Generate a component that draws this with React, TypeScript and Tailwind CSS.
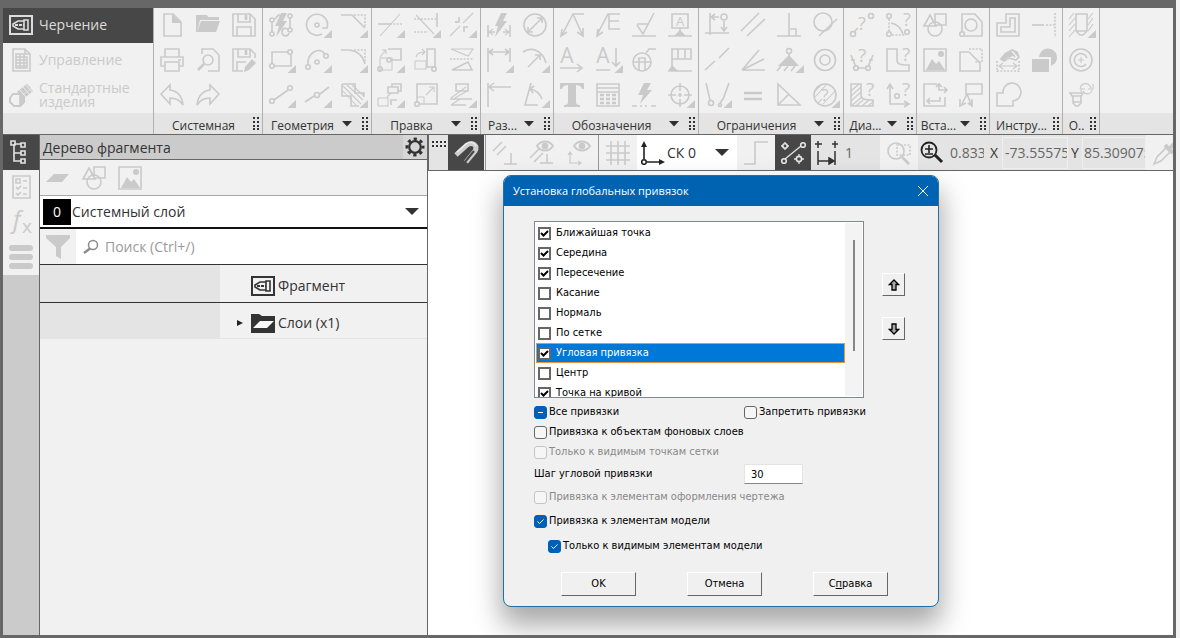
import React, { useState } from "react";
import type { ReactNode } from "react";

type Circle = [number, number, number];
type Letter = [string, number, number, number];

interface Glyph {
  s?: string; // medium strokes
  n?: string; // thin strokes
  d?: string; // dotted strokes
  b?: string; // heavy strokes
  f?: string; // filled shapes
  c?: Circle[];
  x?: Letter[];
  t?: boolean; // corner mark of a button with a drop-down list
}

const BOLT = "M12 0h6l-4 8h4L7 24l3-11H6z";
const Q = (x: number, y: number, size = 15): Letter => ["?", x, y, size];

const glyphs: Record<string, Glyph> = {
  newDoc: { s: "M4 1h9l8 8v14H4z", f: "M12 1l9 9h-9z" },
  open: { f: "M0 2h11l1 2h11v3H4L1 19H0z M5 8h19l-4 11H1z" },
  save: { s: "M1 1h17l5 5v17H1z M6 1v8h12V1 M5 23V14h14v9", b: "M14 2v5" },
  print: { s: "M5 9V1h14v8 M5 18H1V9h22v9h-4 M5 14h14v9H5z M18 12h3" },
  preview: { s: "M6 6V1h11l6 6v16H12", b: "M8 16l-6 6", c: [[12, 12, 5]] },
  saveEdit: { s: "M23 10V6l-5-5H1v22h10 M6 1v8h12V1 M5 23V14h9", b: "M14 2v5", f: "M13 19l7-8 4 4-7 7-5 2z" },
  undo: { s: "M1 11L10 2v5c8 1 12 6 13 15c-3-5-7-7-13-7v6z" },
  redo: { s: "M23 11L14 2v5C6 8 2 13 1 22c3-5 7-7 13-7v6z" },

  autoLine: { s: "M3 9v10 M5 6c3 0 3-5 6-4 M21 5v10 M19 17c-2-3-6-2-6 2c0 5 6 5 7 1", f: BOLT, c: [[3, 7, 2], [3, 21, 2], [21, 3, 2], [21, 17, 2]] },
  circle: { s: "M17 21A10.500 10.500 0 1 1 22 15h-5", c: [[12, 12, 2]], t: true },
  chamfer: { s: "M0 2h11l13 13", d: "M13 2h11v12", t: true },
  rect: { s: "M5 18h17V7 M19 4H3v12", c: [[3, 18, 2.2], [21, 4, 2.2]], t: true },
  arc: { s: "M3 17C2 5 14-2 20 6", c: [[3, 19, 2.2], [21, 8, 2.2], [12, 14, 2]], t: true },
  fillet: { s: "M0 2h8c9 1 14 6 16 14", d: "M13 2h11v12", t: true },
  segment: { s: "M5 17L19 7", c: [[3, 18, 2.300], [21, 5, 2.300]], t: true },
  lineMid: { s: "M0 19l9-6 M15 11l9-7", c: [[12, 12, 2.500]], t: true },
  hatch: { s: "M1 1h13v9h9v4 M1 1v12h9v10h8", n: "M2 3l18 18 M2 8l13 14 M6 2l16 15 M11 2l12 11", t: true },

  trim: { n: "M2 23L22 1", s: "M0 11h12", d: "M12 11h12", t: true },
  extend: { n: "M2 2l18 19", d: "M0 6h22 M0 19h14", s: "M23 0v14", t: true },
  split: { s: "M6 10V8 M5 9h4V4 M18 14h-4v5", n: "M0 23L10 13 M13 10L23 0", t: true },
  moveCopy: { n: "M2 9L8 2 M4 2h4v4 M2 10h12v12H2z", s: "M10 1h13v11H12", c: [[11, 12, 2], [2, 21, 2.2]], t: true },
  rotate: { n: "M1 13h11v8H1z M2 9C3 5 6 4 11 4 M8 1l3 3-3 3", s: "M13 1h8v18H13z", c: [[20, 21, 2.200]] },
  mirror: { n: "M1 1h22l-5 7z", s: "M2 22l16-8 4 8z", d: "M0 11h24" },
  array: { n: "M0 15h10v8H0z M13 10l-4 4", s: "M10 4h10v6H10z M14 4V1h9v7h-3 M13 22v-5h6", t: true },
  scale: { s: "M3 20V1h20v20H5", n: "M3 14h7v7 M12 12l7-7 M15 4h5v5", c: [[3, 21, 2.300]] },
  deform: { s: "M6 1h12v7H6z M0 16h22 M1 22h15", n: "M1 15L16 4 M5 15L17 8 M1 22l9-6", t: true },

  autoDim: { s: "M1 12v12 M23 12v12 M2 19h6 M16 19h6", n: "M6 16l-4 3 4 3 M18 16l4 3-4 3", f: "M14 0h6l-4 8h4L8 24l3-11H8z" },
  diameter: { s: "M5 19L19 5 M14 5h5v5 M5 14v5h5", c: [[12, 12, 11]] },
  linDim: { s: "M1 0v24 M23 0v14 M2 4h20 M6 1L2 4l4 3 M18 1l4 3-4 3", t: true },
  radDim: { s: "M0 4c9-6 20-1 23 11 M5 19L17 7 M12 7h5v5", t: true },
  heightDim: { s: "M1 0v24 M2 4h22 M7 0L2 4l5 4" },
  angDim: { s: "M8 0L2 22h13 M7 6c7 1 10 5 12 10 M11 3L7 6l3 4", t: true },

  leader: { s: "M12 1h12 M13 1L2 22 M13 1l9 20 M2 16l-1 7 6-4 M17 19l6 4v-8" },
  leaderE: { s: "M24 1H12L1 22 M2 16l-1 7 6-4 M13 1v15h11 M13 8h10" },
  rough: { s: "M0 23h24 M5 11h11 M5 12l6 9L22 0" },
  datum: { s: "M4 1h16v14H4z M12 15v6 M0 23h24", f: "M12 17l6 6H6z", x: [["A", 12, 13, 13]] },
  textLine: { s: "M0 20h22 M17 16l5 4-5 4", x: [["A", 7, 15, 21]] },
  textDown: { s: "M0 22h14 M20 0v18 M16 14l4 4 4-4", x: [["A", 7, 15, 21]], t: true },
  weld: { s: "M14 5l3-4h7 M1 14h5 M14 14h5 M7 22V10h6v12 M7 14h6", c: [[10, 14, 9]] },
  tolerance: { s: "M4 1h19v10H4z M10 1v10 M17 1v10 M4 1v22 M0 23h24", f: "M4 17l6 6H0z" },
  text: { f: "M0 0h24v6h-2c-1-3-3-4-6-4v17c0 2 1 3 4 3v2H4v-2c3 0 4-1 4-3V2C5 2 3 3 2 6H0z" },
  table: { s: "M1 1h22v22H1z M1 5h22 M1 9h22", b: "M4 12h4 M10 12h4 M16 12h4 M4 16h4 M10 16h4 M16 16h4 M4 20h4 M10 20h4 M16 20h4" },
  flash: { s: "M0 23h5 M8 23h2 M13 23h2 M19 23h5", f: "M12 0h7l-4 7h5L8 21l3-9H6z" },
  center: { s: "M0 12h8 M10 12h4 M16 12h8 M12 0v8 M12 10v4 M12 16v8", c: [[12, 12, 9]], t: true },

  align: { s: "M5 0v22 M0 20h24 M6 4h8 M10 1L6 4l4 3 M19 8v10 M16 14l3 4 3-4", c: [[19, 4, 3]] },
  parallel: { s: "M0 18L18 0 M6 23L24 6" },
  perp: { s: "M0 23h24 M12 0v23 M13 16h6v7" },
  tangent: { s: "M6 23L24 6", c: [[10, 9, 9]] },
  collinear: { s: "M0 22l10-9 M14 10L24 0" },
  angleEq: { s: "M18 2L1 22 23 11 M1 22h23" },
  fix: { s: "M12 6v4 M4 18l-4 5 M11 18l-4 5 M18 18l-4 5", f: "M12 7L22 18H1z", c: [[12, 3, 2.500]], t: true },
  concentric: { c: [[12, 12, 10.500], [12, 12, 5]] },
  pointOn: { s: "M1 0l4 17 M24 0l-6 16-3 4", c: [[6, 20, 2.500], [15, 22, 1.500]], t: true },
  equal: { b: "M3 10h18 M3 16h18" },
  triangle: { s: "M1 1v21h22z M1 22l11-11" },
  showCons: { n: "M2 8l6-6 M2 14L14 1 M10 21L22 8 M5 20l4-4", x: [Q(12, 18, 17)], c: [[12, 12, 11]], t: true },

  measDist: { s: "M4 19l4-4", c: [[3, 21, 2.500], [21, 3, 2.500]], x: [Q(12, 17, 18)] },
  measAng: { s: "M5 10c6 1 10 5 12 11", d: "M3 6v14 M6 22h14", c: [[3, 3, 2.300], [3, 21, 2.300], [21, 19, 2.300]], x: [Q(21, 13, 18)] },
  measLen: { s: "M1 7l5 12 M23 7l-5 12 M7 20h10 M1 12h4 M19 12h4", c: [[6, 20, 2.300], [18, 20, 2.300]], x: [Q(12, 14, 19)] },
  area: { s: "M1 1h10v11c0 4 3 5 12 5v6H1z", x: [Q(20, 13, 19)] },
  massHatch: { s: "M1 1h10v11c0 4 3 5 12 5v6H1z", n: "M1 8l8-7 M1 13L11 4 M1 18l10-9 M1 23l11-9 M6 23l7-6 M12 23l7-6 M18 23l5-4", x: [Q(20, 13, 19)] },
  coord: { s: "M4 2v19h18 M1 6l3-5 3 5 M18 18l5 3-5 3", c: [[11, 13, 2.300]], x: [Q(20, 13, 19)] },

  shapes: { s: "M7 2L1 13h12z M12 1h11v11H12z", c: [[12, 16, 7]] },
  fragment: { s: "M3 19V1h13l7 8v14H5", c: [[12, 12, 6], [3, 21, 2.300]] },
  image: { s: "M1 1h22v22H1z", f: "M3 22L9 11l4 5 3-3 6 9z M18 3a3 3 0 1 1 0 6a3 3 0 1 1 0-6z" },
  view: { s: "M10 4H1v19h20v-8 M10 4l11 11", d: "M10 1h13v13h-8" },
  insert: { s: "M14 1H1v22h21v-9 M4 18h13v-4 M7 15l-3 3 3 3 M16 1v6h8 M21 4l3 3-3 3 M13 4l3-3 3 3" },
  viewArrow: { s: "M7 1h16v10H7z M8 11L3 21 M8 11l4 10 M1 16v7l6-3 M9 20l4 3v-7" },

  outline: { s: "M10 1h13v22H1V10h9z M14 5h5v14H5v-5h9z" },
  axis: { s: "M0 12h12", d: "M14 12h8 M23 0v24" },
  editDim: { s: "M5 11l4-5 7-4 5 2 2 5-3 3-7-2-5 3z M14 3l5 6 M17 2l5 6", f: "M4 11l5-6 6-3 2 6-6 2-4 3z", n: "M3 18h18 M7 15l-4 3 4 3 M17 15l4 3-4 3", d: "M1 13v11 M23 13v11 M1 23h22" },
  boolean: { f: "M0 11h17v13H0z M7 9a9 9 0 1 1 12 9V9z" },
  union: { s: "M1 10h6a9 9 0 1 1 10 8v5H1z" },

  hole: { s: "M7 1h11v17l-4 4h-3l-4-4z M7 18h11", n: "M0 6l5-6 M0 12l6-7 M0 18l6-7 M0 24l6-7 M19 6l5-6 M19 12l5-7 M19 18l5-7", t: true },
  thread: { n: "M12 9v6 M9 12h6", s: "M18 10a6.500 6.500 0 1 0-1 6", c: [[12, 12, 11]] },
  fastener: { s: "M1 10h13l-2 3H3z M4 13h8v7l-3 3h-2l-3-3z M4 19h8", n: "M11 6c1-7 9-7 11-1 M24 1v5h-5 M23 7c-1 5-7 5-9 1 M12 10V6h4" },
};

function Icon({ name }: { name: string }) {
  const g = glyphs[name];
  return (
    <svg viewBox="0 0 24 24" className="size-6 overflow-visible" fill="none" stroke="currentColor" strokeWidth="1.6" aria-hidden="true">
      {g.f && <path d={g.f} fill="currentColor" stroke="none" />}
      {g.s && <path d={g.s} />}
      {g.n && <path d={g.n} strokeWidth="1.1" />}
      {g.b && <path d={g.b} strokeWidth="2.6" />}
      {g.d && <path d={g.d} strokeDasharray="2 1.4" />}
      {g.c?.map(([cx, cy, r], i) => <circle key={i} cx={cx} cy={cy} r={r} />)}
      {g.x?.map(([ch, x, y, size], i) => (
        <text key={i} x={x} y={y} fontSize={size} textAnchor="middle" fill="currentColor" stroke="none">{ch}</text>
      ))}
      {g.t && <path d="M27 17v8h-8.500z" fill="currentColor" stroke="none" />}
    </svg>
  );
}

interface Group { label: string; cols: string; arrow: boolean; rows: string[] }

const groups: Group[] = [
  { label: "Системная", cols: "w-27 grid-cols-3", arrow: false, rows: ["newDoc", "open", "save", "print", "preview", "saveEdit", "undo", "redo"] },
  { label: "Геометрия", cols: "w-27 grid-cols-3", arrow: true, rows: ["autoLine", "circle", "chamfer", "rect", "arc", "fillet", "segment", "lineMid", "hatch"] },
  { label: "Правка", cols: "w-27 grid-cols-3", arrow: true, rows: ["trim", "extend", "split", "moveCopy", "rotate", "mirror", "array", "scale", "deform"] },
  { label: "Раз...", cols: "w-18 grid-cols-2", arrow: true, rows: ["autoDim", "diameter", "linDim", "radDim", "heightDim", "angDim"] },
  { label: "Обозначения", cols: "w-36 grid-cols-4", arrow: true, rows: ["leader", "leaderE", "rough", "datum", "textLine", "textDown", "weld", "tolerance", "text", "table", "flash", "center"] },
  { label: "Ограничения", cols: "w-36 grid-cols-4", arrow: true, rows: ["align", "parallel", "perp", "tangent", "collinear", "angleEq", "fix", "concentric", "pointOn", "equal", "triangle", "showCons"] },
  { label: "Диа...", cols: "w-18 grid-cols-2", arrow: true, rows: ["measDist", "measAng", "measLen", "area", "massHatch", "coord"] },
  { label: "Вста...", cols: "w-18 grid-cols-2", arrow: true, rows: ["shapes", "fragment", "image", "view", "insert", "viewArrow"] },
  { label: "Инстру...", cols: "w-18 grid-cols-2", arrow: false, rows: ["outline", "axis", "editDim", "boolean", "union"] },
  { label: "О..", cols: "w-9 grid-cols-1", arrow: false, rows: ["hole", "thread", "fastener"] },
];

function Grip() {
  return (
    <svg viewBox="0 0 6 13" className="mr-[3px] h-[13px] w-1.5 shrink-0" fill="#333" aria-hidden="true">
      {[0, 4, 8, 11].map((y) => (
        <path key={y} d={`M0 ${y}h2v2h-2z M4 ${y}h2v2h-2z`} />
      ))}
    </svg>
  );
}

function Caret() {
  return (
    <svg viewBox="0 0 10 6" className="h-1.5 w-2.5 shrink-0" fill="#2e2e2e" aria-hidden="true">
      <path d="M0 0h10L5 5.500z" />
    </svg>
  );
}

function RibbonGroup({ group }: { group: Group }) {
  return (
    <section className="flex shrink-0 flex-col border-r border-[#b0b0b0]" aria-label={group.label}>
      <div className={`grid h-[105px] grid-rows-3 text-[#cacaca] ${group.cols}`}>
        {group.rows.map((n) => (
          <button key={n} type="button" aria-label={n} className="flex items-center justify-center pb-px">
            <Icon name={n} />
          </button>
        ))}
      </div>
      <div className="flex h-[21px] items-center bg-[#e4e4e4]">
        <span className="flex-1 pt-1 text-center text-[12px] leading-4 whitespace-nowrap text-[#333]">{group.label}</span>
        {group.arrow && (
          <button type="button" aria-label="Список" className="mr-2.5"><Caret /></button>
        )}
        <Grip />
      </div>
    </section>
  );
}

function DraftIcon() {
  return (
    <svg viewBox="0 0 24 20" className="h-5 w-6 shrink-0" fill="none" stroke="currentColor" strokeWidth="2" aria-hidden="true">
      <path d="M1 1h22v18H1z" />
      <path d="M15 5h4v10h-4z M15 6H9L4 9v2l5 3h6" strokeWidth="1.600" />
      <path d="M6 10h9" strokeWidth="1.800" strokeDasharray="3 1" />
    </svg>
  );
}

function Ribbon() {
  return (
    <header className="flex h-[127px] overflow-hidden border-b border-[#666] bg-[#f1f1f1]">
      <nav className="flex w-[151px] shrink-0 flex-col border-r border-[#b0b0b0] text-[14px] leading-[14px] text-[#cacaca]">
        <button type="button" className="flex h-[35px] items-center gap-1.5 bg-[#474747] pb-px pl-1.5 text-left text-[#dcdcdc]">
          <DraftIcon />
          Черчение
        </button>
        <button type="button" className="flex h-[35px] items-center gap-1.5 pb-px pl-1.5 text-left">
          <svg viewBox="0 0 24 24" className="size-6 shrink-0" fill="none" stroke="currentColor" strokeWidth="1.6" aria-hidden="true">
            <path d="M4 1h12l5 5v17H4z M16 1v5h5" />
            <path d="M7 6h8v14H7z M15 9h3v11h-3 M7 9h8 M7 12h11 M7 15h11 M7 18h11 M11 6v14" />
          </svg>
          Управление
        </button>
        <button type="button" className="flex h-[35px] items-center gap-1.5 pb-px pl-1.5 text-left">
          <svg viewBox="0 0 24 24" className="size-6 shrink-0" fill="none" stroke="currentColor" strokeWidth="1.5" aria-hidden="true">
            <path d="M9 10l10-8 M11 12L21 4 M13 15L23 7" strokeWidth="3" />
            <path d="M11 7l6 7 M14 4l6 7 M17 2l6 7" stroke="#f1f1f1" strokeWidth="1" />
            <path d="M1 15l3-4h7l4 3v5l-4 4H5l-4-4z" fill="#f1f1f1" strokeWidth="2" />
            <path d="M11 11l4 3v5l-4 4z" fill="currentColor" />
          </svg>
          <span>Стандартные<br />изделия</span>
        </button>
        <div className="flex-1 bg-[#e4e4e4]" />
      </nav>
      {groups.map((g) => <RibbonGroup key={g.label} group={g} />)}
      <div className="flex flex-1 flex-col justify-end">
        <div className="h-[21px] bg-[#e4e4e4]" />
      </div>
    </header>
  );
}

function Rail() {
  return (
    <nav className="w-[37px] shrink-0 border-r border-[#666] bg-[#cbcbcb] text-[#cacaca]">
      <button type="button" aria-label="Дерево" className="flex h-[35px] w-full items-center justify-center bg-[#474747] pr-px pb-px">
        <svg viewBox="0 0 24 24" className="size-6" fill="none" stroke="#e4e4e4" strokeWidth="1.6" aria-hidden="true">
          <path d="M5 4v17h7 M5 4h7 M5 13h7 M2 1h4v4H2z M12 3h4v4h-4z M12 11h4v4h-4z M12 19h4v4h-4z" />
        </svg>
      </button>
      <button type="button" aria-label="Параметры" className="flex h-[35px] w-full items-center justify-center bg-[#f1f1f1] pr-px pb-px">
        <svg viewBox="0 0 24 24" className="size-6" fill="none" stroke="currentColor" strokeWidth="1.6" aria-hidden="true">
          <path d="M4 1h17v22H4z M7 4h4v4H7z M14 6h4 M14 13h4 M14 19h4 M7 12l2 2 3-3 M7 18l2 2 3-3" />
        </svg>
      </button>
      <button type="button" aria-label="Переменные" className="flex h-[35px] w-full items-center justify-center bg-[#f1f1f1] pr-px pb-px">
        <svg viewBox="0 0 24 24" className="size-6 overflow-visible" fill="currentColor" aria-hidden="true">
          <text x="4" y="18" fontSize="24" fontStyle="italic">f</text>
          <text x="13" y="23" fontSize="19">x</text>
        </svg>
      </button>
      <button type="button" aria-label="Список" className="flex h-[35px] w-full items-center justify-center bg-[#f1f1f1] pr-px pb-px">
        <svg viewBox="0 0 24 24" className="size-6" stroke="currentColor" strokeWidth="6" strokeLinecap="round" aria-hidden="true">
          <path d="M3 3h18 M3 12h18 M3 21h18" />
        </svg>
      </button>
    </nav>
  );
}

function TreePanel() {
  return (
    <aside className="flex w-[388px] shrink-0 flex-col border-r border-[#666] bg-[#f1f1f1] text-[14px] text-[#333]">
      <div className="flex h-[25px] items-center justify-between border-b border-[#666] bg-[#cbcbcb] pl-[3px]">
        <h2>Дерево фрагмента</h2>
        <button type="button" aria-label="Настройка" className="flex h-6 w-6 items-center justify-center bg-[#d6d6d6]">
          <svg viewBox="0 0 20 20" className="size-5" fill="none" stroke="#333" aria-hidden="true">
            <circle cx="10" cy="10" r="5.800" strokeWidth="2.200" />
            <circle cx="10" cy="10" r="8" strokeWidth="3" strokeDasharray="3.200 3.083" strokeDashoffset="1.600" />
          </svg>
        </button>
      </div>
      <div className="flex h-9 items-center gap-3 border-b border-[#a8a8a8] pl-1.5 text-[#cacaca]">
        <button type="button" aria-label="Слой">
          <svg viewBox="0 0 24 24" className="size-6" fill="currentColor" aria-hidden="true"><path d="M8 8h15l-7 8H0z" /></svg>
        </button>
        <button type="button" aria-label="Фигуры"><Icon name="shapes" /></button>
        <button type="button" aria-label="Рисунок"><Icon name="image" /></button>
      </div>
      <div className="flex h-[33px] items-center border-b-2 border-[#111] bg-white pl-[3px]">
        <span className="flex h-[26px] w-7 items-center justify-center bg-black text-white">0</span>
        <select aria-label="Текущий слой" className="h-7 min-w-0 flex-1 appearance-none bg-transparent pl-px">
          <option>Системный слой</option>
        </select>
        <svg viewBox="0 0 14 7" className="pointer-events-none mr-2 h-[7px] w-3.5" fill="#333" aria-hidden="true"><path d="M0 0h14L7 7z" /></svg>
      </div>
      <div className="flex h-9 items-center border-b border-[#333] bg-white">
        <button type="button" aria-label="Фильтр" className="flex h-full w-9 items-center justify-center bg-[#f1f1f1] text-[#cacaca]">
          <svg viewBox="0 0 24 24" className="size-6" fill="currentColor" aria-hidden="true"><path d="M0 0h24v3l-9 9v12l-5-3v-9L0 3z" /></svg>
        </button>
        <svg viewBox="0 0 16 16" className="ml-[7px] size-4" fill="none" stroke="#8a8a8a" aria-hidden="true">
          <circle cx="10" cy="6" r="4.500" strokeWidth="1.500" />
          <path d="M7 9.500L1 14" strokeWidth="2.200" />
        </svg>
        <input aria-label="Поиск" placeholder="Поиск (Ctrl+/)" className="h-8 min-w-0 flex-1 bg-transparent px-1.5 outline-none placeholder:text-[#9a9a9a]" />
      </div>
      <ul>
        <li className="flex h-[38px] border-b border-[#333]">
          <div className="w-[180px] bg-[#e4e4e4]" />
          <div className="flex items-center gap-[3px] pt-1 pl-[31px]"><DraftIcon />Фрагмент</div>
        </li>
        <li className="flex h-9">
          <div className="w-[180px] bg-[#e4e4e4]" />
          <div className="flex flex-1 items-center gap-[3px] border-b border-[#e4e4e4] pt-1 pl-[17px]">
            <button type="button" aria-label="Развернуть" className="w-[11px]">
              <svg viewBox="0 0 6 8" className="h-2 w-1.5" fill="#222" aria-hidden="true"><path d="M0 1l6 3-6 3z" /></svg>
            </button>
            <svg viewBox="0 0 24 20" className="h-5 w-6" aria-hidden="true">
              <path d="M0 1h8l3 2h13v17H0z" fill="#333" />
              <path d="M9 8h14l-7 7H2z" fill="#f8f8f8" />
            </svg>
            Слои (x1)
          </div>
        </li>
      </ul>
    </aside>
  );
}

function Tool({ label, children, className = "" }: { label: string; children: ReactNode; className?: string }) {
  return (
    <button type="button" aria-label={label} className={`flex h-full shrink-0 items-center justify-center ${className}`}>
      <svg viewBox="0 0 24 24" className="size-6 overflow-visible" fill="none" stroke="currentColor" strokeWidth="1.6" aria-hidden="true">
        {children}
      </svg>
    </button>
  );
}

const eye = (
  <>
    <path d="M7 5c4-6 12-6 16 0c-4 6-12 6-16 0z" strokeWidth="2" />
    <circle cx="15" cy="5" r="2.500" fill="currentColor" />
  </>
);

function ViewToolbar() {
  const [scale, setScale] = useState("0.833");
  const [x, setX] = useState("-73.555757");
  const [y, setY] = useState("85.309075");
  return (
    <div className="flex h-9 items-center overflow-hidden border-b border-l border-[#666] bg-[#f1f1f1] text-[14px] text-[#cacaca]">
      <div className="h-full w-[19px] shrink-0 bg-[#e4e4e4] pt-1.5 pl-[3px]">
        <svg viewBox="0 0 14 6" className="h-1.5 w-3.5" fill="#333" aria-hidden="true">
          {[0, 4, 8, 12].map((v) => <path key={v} d={`M${v} 0h2v2h-2z M${v} 4h2v2h-2z`} />)}
        </svg>
      </div>
      <Tool label="Привязки" className="w-9 bg-[#474747] text-[#cfcfcf]">
        <path d="M2 14L13 4c6-4 11 1 8 6L12 21" strokeWidth="5" />
        <path d="M3 11L12 3c5-3 9-1 10 2" stroke="#f2f2f2" strokeWidth="1.200" />
        <path d="M20 10l-9 11" stroke="#474747" strokeWidth="2.200" />
      </Tool>
      <div className="ml-px flex h-full w-[114px] shrink-0 items-center justify-around border-x border-[#999]">
        <Tool label="Ортогонально"><path d="M0 10l9-9 M4 14l9-9 M18 12v11 M11 23h13" /></Tool>
        <Tool label="Показать ограничения">{eye}<path d="M0 17l9-9 M4 21l9-9 M17 13v9 M10 22h13" /></Tool>
        <Tool label="Показать системы">{eye}<path d="M3 11v11h11 M1 14l2-3 2 3 M11 20l3 2-3 2" strokeWidth="1.200" /></Tool>
      </div>
      <Tool label="Сетка" className="w-[38px]"><path d="M5 0v24 M12 0v24 M19 0v24 M0 5h24 M0 12h24 M0 19h24" /></Tool>
      <div className="flex h-full w-[100px] shrink-0 items-center bg-white pl-1 text-[#333]">
        <svg viewBox="0 0 24 24" className="size-6 shrink-0" fill="none" stroke="#222" strokeWidth="1.6" aria-hidden="true">
          <path d="M3 18V4 M6 21h14" />
          <path d="M0 6l3-6 3 6z M18 18l6 3-6 3z" fill="#222" stroke="none" />
          <circle cx="3" cy="21" r="2.300" />
        </svg>
        <select aria-label="Система координат" className="h-7 min-w-0 flex-1 appearance-none bg-transparent pl-0.5">
          <option>СК 0</option>
        </select>
        <svg viewBox="0 0 14 7" className="pointer-events-none mr-2 h-[7px] w-3.5" fill="#333" aria-hidden="true"><path d="M0 0h14L7 7z" /></svg>
      </div>
      <Tool label="Ступень" className="w-[38px]"><path d="M0 23h11V1h13" /></Tool>
      <Tool label="Глобальные привязки" className="w-9 bg-[#474747] text-[#e4e4e4]">
        <path d="M4 18L20 5 M4 1v8 M0 5h8 M18 13v10 M13 18h10" strokeWidth="1.300" />
        <circle cx="3" cy="20" r="2.300" fill="#474747" /><circle cx="22" cy="4" r="2.300" fill="#474747" />
        <circle cx="4" cy="5" r="2.200" fill="#474747" /><circle cx="18" cy="18" r="2.600" fill="#474747" />
      </Tool>
      <label className="flex h-full w-[69px] shrink-0 items-center bg-[#e4e4e4] pl-1 text-[#666]">
        <svg viewBox="0 0 24 24" className="size-6 shrink-0" fill="none" stroke="#333" strokeWidth="1.500" aria-label="Шаг курсора">
          <path d="M3 10v14 M20 10v14 M3 20h13 M3 0v7 M0 3h7 M20 0v7 M17 3h6" />
          <path d="M14 17l5 3-5 3z" fill="#333" />
        </svg>
        <input defaultValue="1" className="h-7 w-9 bg-transparent pl-1.5" />
      </label>
      <Tool label="Рамкой" className="w-[38px]">
        <circle cx="9" cy="10" r="8" /><path d="M15 16l7 7" strokeWidth="2.600" /><path d="M10 4h13v10H10z" strokeDasharray="2 1.500" />
      </Tool>
      <div className="flex h-full min-w-0 items-center bg-[#e4e4e4] text-[#666]">
        <Tool label="Масштаб" className="w-7 text-[#222]">
          <circle cx="9" cy="9" r="7.500" strokeWidth="1.800" /><path d="M15 14l7 7" strokeWidth="3" /><path d="M5 8h8 M9 4v8 M5 13h8" />
        </Tool>
        <input aria-label="Масштаб вида" value={scale} onChange={(e) => setScale(e.target.value)} className="h-8 w-10 border-r-2 border-transparent bg-transparent pl-1" />
        <label className="flex items-center text-[#333]">
          <span className="w-4 text-center">X</span>
          <input value={x} onChange={(e) => setX(e.target.value)} className="h-8 w-[66px] border border-[#efefef] bg-transparent pl-0.5 text-[#666]" />
        </label>
        <label className="flex items-center text-[#333]">
          <span className="w-3.5 text-center">Y</span>
          <input value={y} onChange={(e) => setY(e.target.value)} className="h-8 w-[64px] border border-[#efefef] bg-transparent pl-px text-[#666]" />
        </label>
      </div>
      <div className="flex h-full flex-1 justify-end overflow-hidden">
        <Tool label="Пипетка" className="w-4">
          <path d="M1 23l3-7 9-9 4 4-9 9z" /><path d="M12 4l8 8M16 8l6-6" strokeWidth="4" />
        </Tool>
      </div>
    </div>
  );
}

interface BoxProps { label: string; checked?: boolean; mixed?: boolean; disabled?: boolean }

function Check({ label, checked = false, mixed = false, disabled = false }: BoxProps) {
  const [on, setOn] = useState(checked || mixed);
  return (
    <label className={disabled ? "flex h-5 items-center gap-0.5 text-[#888]" : "flex h-5 items-center gap-0.5"}>
      <span className="grid size-[13px] shrink-0">
        <input
          type="checkbox"
          checked={on}
          disabled={disabled}
          onChange={(e) => setOn(e.target.checked)}
          className="col-start-1 row-start-1 size-[13px] appearance-none rounded-[3px] border border-[#666] bg-[#f6f6f6] checked:border-[#005fb8] checked:bg-[#005fb8] disabled:border-[#c4c4c4]"
        />
        {on && (
          <svg viewBox="0 0 13 13" className="pointer-events-none col-start-1 row-start-1 size-[13px]" fill="none" stroke="#fff" aria-hidden="true">
            <path d={mixed ? "M4 6.500h5" : "M3.500 6.500l2 2 4-4"} />
          </svg>
        )}
      </span>
      {label}
    </label>
  );
}

function ListCheck({ label, checked, selected }: { label: string; checked: boolean; selected: boolean }) {
  const [on, setOn] = useState(checked);
  return (
    <li className={selected ? "border border-[#e8963c] bg-[#0078d7] text-white" : "border border-transparent"}>
      <label className="flex h-[18px] items-center gap-[5px] pl-px">
        <span className="grid size-[13px] shrink-0">
          <input
            type="checkbox"
            checked={on}
            onChange={(e) => setOn(e.target.checked)}
            className="col-start-1 row-start-1 size-[13px] appearance-none border-2 border-[#666] bg-white"
          />
          {on && (
            <svg viewBox="0 0 13 13" className="pointer-events-none col-start-1 row-start-1 size-[13px]" fill="none" stroke="#000" strokeWidth="2" aria-hidden="true">
              <path d="M3 6l2.500 2.500L10 4" />
            </svg>
          )}
        </span>
        {label}
      </label>
    </li>
  );
}

const snaps: [string, boolean][] = [
  ["Ближайшая точка", true],
  ["Середина", true],
  ["Пересечение", true],
  ["Касание", false],
  ["Нормаль", false],
  ["По сетке", false],
  ["Угловая привязка", true],
  ["Центр", false],
  ["Точка на кривой", true],
];

const raised = "border-t border-l border-r border-b border-t-white border-l-white border-r-[#666] border-b-[#666] bg-[#f0f0f0]";

function SnapDialog() {
  return (
    <div
      role="dialog"
      aria-labelledby="snap-title"
      className="w-[436px] overflow-hidden rounded-lg border border-[#1f6fa8] bg-[#f0f0f0] font-['DejaVu_Sans_Condensed','Tahoma',sans-serif] text-[11px] leading-4 text-black shadow-[0_16px_28px_2px_rgba(0,0,0,0.35)]"
    >
      <div className="flex h-[30px] items-center justify-between bg-[#0063b1] pr-2.5 pl-[9px] text-white">
        <h1 id="snap-title" className="font-['Open_Sans','Segoe_UI',sans-serif]">Установка глобальных привязок</h1>
        <button type="button" aria-label="Закрыть">
          <svg viewBox="0 0 10 10" className="size-2.5" stroke="#fff" aria-hidden="true"><path d="M0 0l10 10M10 0L0 10" /></svg>
        </button>
      </div>
      <form className="px-[30px] pt-[15px] pb-2.5" onSubmit={(e) => e.preventDefault()}>
        <div className="flex gap-[18px]">
          <div className="flex h-[177px] w-[330px] shrink-0 overflow-hidden border border-[#828790] bg-white p-px">
            <ul className="flex-1">
              {snaps.map(([label, on]) => (
                <ListCheck key={label} label={label} checked={on} selected={label === "Угловая привязка"} />
              ))}
            </ul>
            <div className="flex w-[17px] justify-center bg-[#f3f3f3] pt-[17px]">
              <div className="h-[111px] w-0.5 bg-[#868686]" />
            </div>
          </div>
          <div className="flex flex-col gap-[21px] pt-[52px]">
            <button type="button" aria-label="Выше" className={`flex size-[23px] items-center justify-center ${raised}`}>
              <svg viewBox="0 0 12 12" className="size-3" fill="#aaa" stroke="#000" strokeWidth="1.300" aria-hidden="true"><path d="M6 1l4.500 4.500H8V11H4V5.500H1.500z" /></svg>
            </button>
            <button type="button" aria-label="Ниже" className={`flex size-[23px] items-center justify-center ${raised}`}>
              <svg viewBox="0 0 12 12" className="size-3" fill="#aaa" stroke="#000" strokeWidth="1.300" aria-hidden="true"><path d="M6 11L1.500 6.500H4V1h4v5.500h2.500z" /></svg>
            </button>
          </div>
        </div>
        <div className="mt-1 grid grid-cols-[210px_1fr] whitespace-nowrap">
          <Check label="Все привязки" mixed />
          <Check label="Запретить привязки" />
        </div>
        <Check label="Привязка к объектам фоновых слоев" />
        <Check label="Только к видимым точкам сетки" disabled />
        <div className="mt-0.5 grid grid-cols-[210px_59px] items-center">
          <label htmlFor="snap-step">Шаг угловой привязки</label>
          <input id="snap-step" defaultValue="30" className="h-5 border border-[#e4e4e4] border-b-[#868686] bg-white px-1.5" />
        </div>
        <div className="mt-[3px]"><Check label="Привязка к элементам оформления чертежа" disabled /></div>
        <div className="mt-1"><Check label="Привязка к элементам модели" checked /></div>
        <div className="mt-[5px] pl-3.5"><Check label="Только к видимым элементам модели" checked /></div>
        <div className="mt-4 flex gap-[51px] pl-[27px]">
          <button type="submit" className={`h-6 w-[75px] shrink-0 ${raised}`}>OK</button>
          <button type="button" className={`h-6 w-[75px] shrink-0 ${raised}`}>Отмена</button>
          <button type="button" className={`h-6 w-[75px] shrink-0 ${raised}`}>С<u>п</u>равка</button>
        </div>
      </form>
    </div>
  );
}

export default function App() {
  return (
    <div className="flex min-h-screen bg-[#f3f3f3] pr-1 font-['Open_Sans','Segoe_UI',sans-serif]">
      <div className="flex min-w-0 flex-1 flex-col bg-[#676767] pt-2 pr-[3px] pb-[3px] pl-[3px]">
        <Ribbon />
        <div className="flex flex-1">
          <Rail />
          <TreePanel />
          <main className="flex min-w-0 flex-1 flex-col overflow-hidden bg-white">
            <ViewToolbar />
            <div className="flex flex-1 items-start pt-1 pb-7 pl-[75px]">
              <SnapDialog />
            </div>
          </main>
        </div>
      </div>
    </div>
  );
}
